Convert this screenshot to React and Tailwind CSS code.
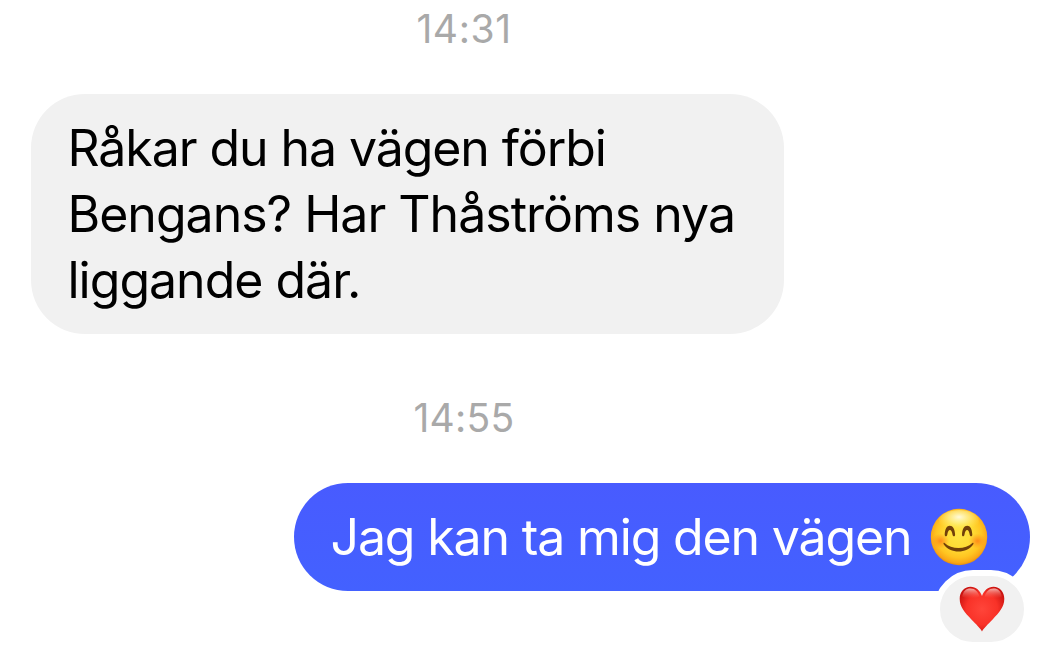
import React from 'react';

/**
 * Main chat view
 */
function App() {
  return (
    <div className="flex h-[668px] w-[1054px] flex-col overflow-hidden bg-white font-['Inter','Liberation_Sans',sans-serif]">
      <TimeStamp className="mt-[5px] tracking-[0.6px]">14:31</TimeStamp>

      <ReceivedMessage />

      <TimeStamp className="mt-[60px] tracking-[0.3px]">14:55</TimeStamp>

      <SentMessage />
    </div>
  );
}

/**
 * Centered time label between messages
 */
function TimeStamp({ className, children }) {
  return (
    <div className="w-[928px] text-center text-[39px] leading-[48px] font-[370] text-[#a9a9a9]">
      <div className={className}>{children}</div>
    </div>
  );
}

/**
 * Grey bubble, left side
 */
function ReceivedMessage() {
  return (
    <div className="mt-[41px] ml-[31px] h-[240px] w-[753px] rounded-[54px] bg-[#f1f1f1] pt-[21px] pl-[36.5px] text-[50px] leading-[66px] whitespace-nowrap text-black">
      <p className="tracking-[-1.08px]">Råkar du ha vägen förbi</p>
      <p className="tracking-[-1px]">Bengans? Har Thåströms nya</p>
      <p className="tracking-[-1px]">liggande där.</p>
    </div>
  );
}

/**
 * Blue bubble, right side, with a heart reaction
 */
function SentMessage() {
  return (
    <div className="relative mt-[41px] ml-[294px] flex h-[108px] w-[736px] items-center rounded-full bg-linear-to-b from-[#485bff] to-[#4361ff] pr-[42px] pl-[36.5px] text-[50px] leading-[66px] whitespace-nowrap text-white">
      <p className="tracking-[-1.15px]">Jag kan ta mig den vägen</p>
      <SmileEmoji />
      <div className="absolute top-[87px] right-0 flex h-[78px] w-24 items-center justify-center rounded-full border-6 border-white bg-[#f1f1f1]">
        <HeartEmoji />
      </div>
    </div>
  );
}

function SmileEmoji() {
  return (
    <svg className="ml-auto h-[58px] w-[58px] shrink-0" viewBox="0 0 58 58">
      <defs>
        <radialGradient id="face" cx="50%" cy="46%" r="54%">
          <stop offset="0" stopColor="#ffe545" />
          <stop offset="0.45" stopColor="#ffdc35" />
          <stop offset="0.75" stopColor="#ffc421" />
          <stop offset="0.92" stopColor="#faa817" />
          <stop offset="1" stopColor="#e78d0d" />
        </radialGradient>
        <radialGradient id="shine" cx="50%" cy="32%" r="60%">
          <stop offset="0" stopColor="#fffef0" stopOpacity="0.9" />
          <stop offset="0.45" stopColor="#fffbb0" stopOpacity="0.55" />
          <stop offset="1" stopColor="#fff05a" stopOpacity="0" />
        </radialGradient>
        <radialGradient id="blush">
          <stop offset="0" stopColor="#ff7a16" stopOpacity="0.8" />
          <stop offset="1" stopColor="#ff8c1a" stopOpacity="0" />
        </radialGradient>
      </defs>
      <circle cx="29" cy="29" r="28.2" fill="url(#face)" />
      <ellipse cx="29" cy="13" rx="20" ry="11" fill="url(#shine)" />
      <ellipse cx="10.5" cy="33" rx="9" ry="7.5" fill="url(#blush)" />
      <ellipse cx="47.5" cy="33" rx="9" ry="7.5" fill="url(#blush)" />
      <g fill="#71400a">
        <path d="M14.7 26.5C15 21 16.8 17.7 19.8 17.7C22.8 17.7 24.8 21 25.1 26.5C25.2 28.8 23 28.9 22.6 27C22 23.6 21.2 22.1 19.9 22.1C18.6 22.1 17.8 23.6 17.2 27C16.8 28.9 14.6 28.8 14.7 26.5Z" />
        <path d="M32 26.5C32.3 21 34.2 17.7 37.2 17.7C40.2 17.7 42 21 42.3 26.5C42.4 28.8 40.2 28.9 39.8 27C39.2 23.6 38.4 22.1 37.1 22.1C35.8 22.1 35 23.6 34.4 27C34 28.9 31.9 28.8 32 26.5Z" />
        <path d="M14.6 35C21.5 41.8 35.5 41.8 42.4 35C43.3 34.4 43.9 35.3 43.3 36.3C37 46 20 46 13.7 36.3C13.1 35.3 13.7 34.4 14.6 35Z" />
      </g>
    </svg>
  );
}

function HeartEmoji() {
  return (
    <svg className="h-[46px] w-[46px]" viewBox="0 0 46 46">
      <defs>
        <radialGradient id="heart" cx="50%" cy="50%" r="58%">
          <stop offset="0" stopColor="#ff453a" />
          <stop offset="0.6" stopColor="#f93228" />
          <stop offset="1" stopColor="#c9120f" />
        </radialGradient>
        <linearGradient id="gloss" x1="0" y1="0" x2="0" y2="1">
          <stop offset="0" stopColor="#ffd9d4" stopOpacity="0.8" />
          <stop offset="1" stopColor="#ff6a5c" stopOpacity="0" />
        </linearGradient>
      </defs>
      <path
        d="M23 45.4C21.6 42.4 17 38.2 12.4 33.4C5.8 26.6 0.7 20.8 0.7 12.8C0.7 5.8 5.2 0.8 11.5 0.8C17 0.8 21 4.6 23 10C25 4.6 29 0.8 34.5 0.8C40.8 0.8 45.3 5.8 45.3 12.8C45.3 20.8 40.2 26.6 33.6 33.4C29 38.2 24.4 42.4 23 45.4Z"
        fill="url(#heart)"
      />
      <path d="M3.2 10.5C4.2 5 7 2.4 11.5 2.4C16 2.4 19 5.4 20.5 10.5C16 13 7 13 3.2 10.5Z" fill="url(#gloss)" />
      <path d="M25.5 10.5C27 5.4 30 2.4 34.5 2.4C39 2.4 41.8 5 42.8 10.5C39 13 30 13 25.5 10.5Z" fill="url(#gloss)" />
    </svg>
  );
}

export default App;
